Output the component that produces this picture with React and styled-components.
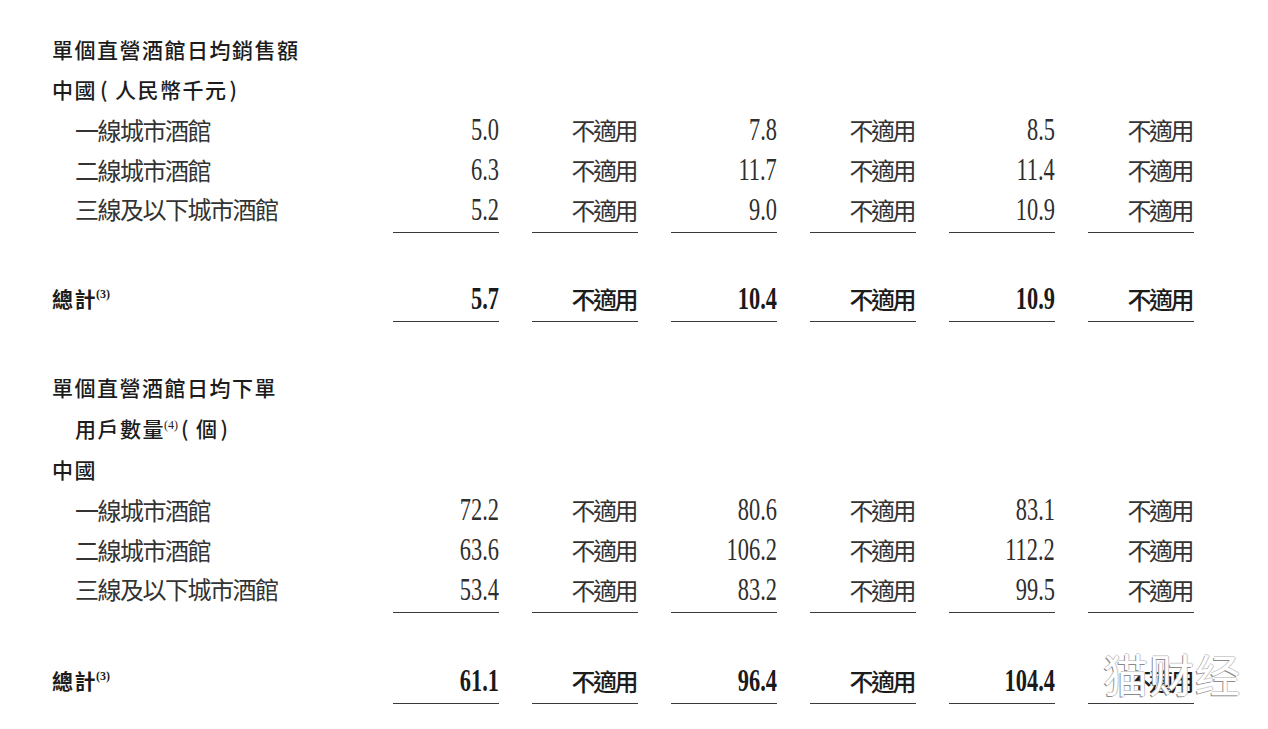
import React from 'react';
import styled, { createGlobalStyle } from 'styled-components';

const GlobalStyle = createGlobalStyle`
  html, body {
    margin: 0;
    padding: 0;
    background: #fff;
  }
  body {
    font-family: "Noto Sans CJK TC", "Noto Sans", sans-serif;
    color: #222;
  }
`;

const Page = styled.div`
  position: relative;
  width: 1268px;
  height: 729px;
  padding: 29px 0 0 52px;
  box-sizing: border-box;
  overflow: hidden;
`;

const Row = styled.div`
  display: grid;
  grid-template-columns: 308px repeat(6, 106px);
  column-gap: 33px;
  height: ${p => (p.$ruled ? '44px' : '40px')};
  margin-top: ${p => p.$gap || 0}px;
`;

const Heading = styled.div`
  grid-column: 1 / -1;
  display: flex;
  align-items: center;
  padding-left: ${p => (p.$indent ? '23px' : '0')};
  font-size: 21px;
  font-weight: 500;
  letter-spacing: 1.5px;
  color: #1c1c1c;
  white-space: nowrap;
`;

const Paren = styled.span`
  margin: ${p => (p.$open ? '0 6px 0 3px' : '0 0 0 2px')};
`;

const Label = styled.div`
  display: flex;
  align-items: center;
  padding-left: ${p => (p.$total ? '0' : '23px')};
  padding-bottom: ${p => (p.$ruled ? '4.5px' : '0')};
  font-size: ${p => (p.$total ? '21px' : '24px')};
  font-weight: ${p => (p.$total ? 700 : 400)};
  letter-spacing: ${p => (p.$total ? '1.5px' : '-1.5px')};
  color: ${p => (p.$total ? '#1c1c1c' : '#333')};
  white-space: nowrap;
`;

const Sup = styled.span`
  font-family: "Liberation Serif", serif;
  font-size: 12px;
  font-weight: ${p => (p.$bold ? 700 : 400)};
  letter-spacing: 0;
  margin-left: -1px;
  align-self: flex-start;
  margin-top: ${p => p.$top || 8}px;
`;

const Cell = styled.div`
  display: flex;
  align-items: center;
  justify-content: flex-end;
  box-sizing: border-box;
  padding-bottom: ${p => (p.$rule ? '3px' : '0')};
  border-bottom: ${p => (p.$rule ? '1.5px solid #3a3a3a' : 'none')};
  white-space: nowrap;
`;

const Num = styled.span`
  display: inline-block;
  font-family: "Liberation Serif", "Times New Roman", serif;
  font-size: 32px;
  line-height: 1;
  font-weight: ${p => (p.$bold ? 700 : 400)};
  color: ${p => (p.$bold ? '#1a1a1a' : '#2e2e2e')};
  transform: scaleX(0.7);
  transform-origin: right center;
`;

const NA = styled.span`
  display: inline-block;
  font-size: 24px;
  font-weight: ${p => (p.$bold ? 500 : 400)};
  letter-spacing: -2.5px;
  color: ${p => (p.$bold ? '#1c1c1c' : '#333')};
  padding-right: 2px;
`;

const Watermark = styled.div`
  position: absolute;
  left: 1103px;
  top: 651px;
  font-family: "Noto Sans CJK SC", sans-serif;
  font-size: 45px;
  line-height: 1;
  letter-spacing: 1px;
  color: #fff;
  text-shadow: -1px 1px 0 #8a8a8a, 1px 0 0 #c4c4c4, 0 -1px 0 #d0d0d0;
`;

const sales = {
  rows: [
    ['一線城市酒館', '5.0', '7.8', '8.5'],
    ['二線城市酒館', '6.3', '11.7', '11.4'],
    ['三線及以下城市酒館', '5.2', '9.0', '10.9'],
  ],
  total: ['5.7', '10.4', '10.9'],
};

const users = {
  rows: [
    ['一線城市酒館', '72.2', '80.6', '83.1'],
    ['二線城市酒館', '63.6', '106.2', '112.2'],
    ['三線及以下城市酒館', '53.4', '83.2', '99.5'],
  ],
  total: ['61.1', '96.4', '104.4'],
};

const DataRow = ({ label, values, ruled, gap }) => (
  <Row $ruled={ruled} $gap={gap}>
    <Label $ruled={ruled}>{label}</Label>
    {values.map((v, i) => (
      <React.Fragment key={i}>
        <Cell $rule={ruled}><Num>{v}</Num></Cell>
        <Cell $rule={ruled}><NA>不適用</NA></Cell>
      </React.Fragment>
    ))}
  </Row>
);

const TotalRow = ({ values, gap }) => (
  <Row $ruled $gap={gap}>
    <Label $total $ruled>總計<Sup $bold $top={9}>(3)</Sup></Label>
    {values.map((v, i) => (
      <React.Fragment key={i}>
        <Cell $rule><Num $bold>{v}</Num></Cell>
        <Cell $rule><NA $bold>不適用</NA></Cell>
      </React.Fragment>
    ))}
  </Row>
);

const Block = ({ data, gap }) => (
  <>
    {data.rows.map((r, i) => (
      <DataRow
        key={r[0]}
        label={r[0]}
        values={r.slice(1)}
        gap={i === 0 ? gap : 0}
        ruled={i === data.rows.length - 1}
      />
    ))}
  </>
);

export default function App() {
  return (
    <Page>
      <GlobalStyle />
      <Row><Heading>單個直營酒館日均銷售額</Heading></Row>
      <Row><Heading>中國<Paren $open>(</Paren>人民幣千元<Paren>)</Paren></Heading></Row>
      <Block data={sales} />
      <TotalRow values={sales.total} gap={45} />

      <Row $gap={45}><Heading>單個直營酒館日均下單</Heading></Row>
      <Row $gap={1}><Heading $indent>用戶數量<Sup $top={10}>(4)</Sup><Paren $open>(</Paren>個<Paren>)</Paren></Heading></Row>
      <Row $gap={1}><Heading>中國</Heading></Row>
      <Block data={users} />
      <TotalRow values={users.total} gap={47} />

      <Watermark>猫财经</Watermark>
    </Page>
  );
}
